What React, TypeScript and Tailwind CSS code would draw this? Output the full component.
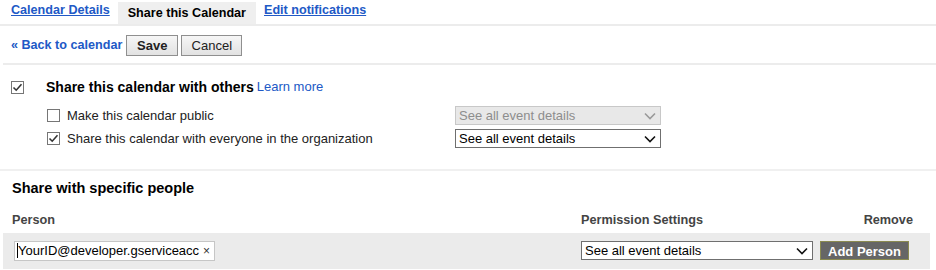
import { useState } from 'react'

function Check({ checked }: { checked: boolean }) {
  return (
    <span className="inline-flex h-[13px] w-[13px] items-center justify-center border border-[#767676] bg-white">
      {checked && (
        <svg width="11" height="11" viewBox="0 0 11 11">
          <path d="M1.5 5.5 L4.2 8.2 L9.5 2.2" fill="none" stroke="#333" strokeWidth="1.6" />
        </svg>
      )}
    </span>
  )
}

function Select({ width, disabled }: { width: string; disabled?: boolean }) {
  return (
    <div
      className={`flex h-[19px] items-center justify-between border pl-[3px] pr-[4px] text-[13px] ${width} ${
        disabled ? 'border-[#c8c8c8] bg-[#e8e8e8] text-[#8d8d8d]' : 'border-[#6f6f6f] bg-white text-black'
      }`}
    >
      <span>See all event details</span>
      <svg width="12" height="8" viewBox="0 0 12 8">
        <path d="M1 1.5 L6 6.5 L11 1.5" fill="none" stroke={disabled ? '#9a9a9a' : '#111'} strokeWidth="1.6" />
      </svg>
    </div>
  )
}

export default function App() {
  const [tab] = useState('share')
  const link = 'text-[#2159c6]'

  return (
    <div className="h-[270px] w-[936px] overflow-hidden bg-white font-['Liberation_Sans',Arial,sans-serif] text-[13px] text-[#222]">
      {/* tabs */}
      <div className="flex h-[26px] items-end border-b-2 border-[#ececec] pl-[11px] text-[12.6px]">
        <a className={`mb-[4px] mr-[8px] font-bold underline ${link}`}>Calendar Details</a>
        <div className={`flex h-[22px] items-center px-[10px] font-bold text-black ${tab === 'share' ? 'bg-[#efefef]' : ''}`}>
          Share this Calendar
        </div>
        <a className={`mb-[4px] ml-[8px] font-bold underline ${link}`}>Edit notifications</a>
      </div>

      {/* back row */}
      <div className="ml-[3px] flex h-[39px] items-center border-b-2 border-[#ececec] pl-[8px] pt-[1px]">
        <a className={`mr-[4px] text-[12.6px] font-bold ${link}`}>« Back to calendar</a>
        <button className="h-[21px] w-[52px] border border-[#8f8f8f] bg-gradient-to-b from-[#f6f6f6] to-[#e2e2e2] font-bold text-[#222]">
          Save
        </button>
        <button className="ml-[3px] h-[21px] w-[61px] border border-[#8f8f8f] bg-gradient-to-b from-[#f6f6f6] to-[#e2e2e2] text-[#222]">
          Cancel
        </button>
      </div>

      {/* share with others */}
      <div className="h-[106px] border-b-2 border-[#f0f0f0] pl-[11px] pt-[14px]">
        <div className="flex h-[16px] items-center">
          <span className="mt-[4px]">
            <Check checked />
          </span>
          <span className="ml-[22px] text-[14px] font-bold text-black">Share this calendar with others</span>
          <a className={`ml-[3px] ${link}`}>Learn more</a>
        </div>
        <div className="mt-[9px] flex h-[23px] items-center">
          <div className="flex w-[444px] items-center pl-[36px]">
            <Check checked={false} />
            <span className="ml-[7px]">Make this calendar public</span>
          </div>
          <Select width="w-[206px]" disabled />
        </div>
        <div className="flex h-[23px] items-center">
          <div className="flex w-[444px] items-center pl-[36px]">
            <Check checked />
            <span className="ml-[7px]">Share this calendar with everyone in the organization</span>
          </div>
          <Select width="w-[206px]" />
        </div>
      </div>

      {/* specific people */}
      <div className="pl-[12px] pt-[7px] text-[14.5px] font-bold text-black">Share with specific people</div>
      <div className="mt-[11px] flex items-center pl-[12px] pr-[23px] text-[12.7px] font-bold text-[#444]">
        <span className="w-[569px]">Person</span>
        <span className="flex-1">Permission Settings</span>
        <span>Remove</span>
      </div>
      <div className="ml-[3px] mr-[6px] mt-[3px] flex h-[36px] items-center bg-[#ebebeb] pl-[11px]">
        <div className="flex h-[20px] w-[201px] items-center border border-[#c6c6c6] bg-white pl-[2px] pr-[4px] text-black">
          <span className="h-[15px] w-px shrink-0 bg-black" />
          <span className="w-[182px] overflow-hidden whitespace-nowrap">YourID@developer.gserviceacc</span>
          <span className="ml-auto text-[12px] text-[#333]">×</span>
        </div>
        <div className="ml-[366px]">
          <Select width="w-[232px]" />
        </div>
        <button className="ml-[7px] h-[19px] w-[89px] border border-[#8a8a50] bg-[#666] font-bold text-white">
          Add Person
        </button>
      </div>
    </div>
  )
}
